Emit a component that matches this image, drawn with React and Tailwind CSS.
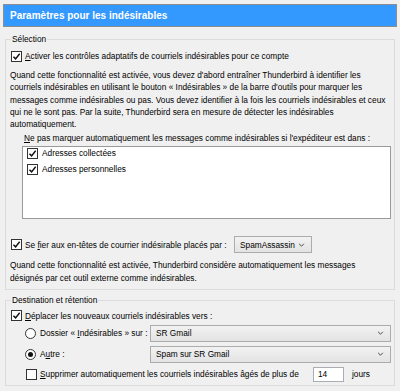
import React from "react";

const Check = ({ checked }) => (
  <span className="flex h-[11px] w-[11px] shrink-0 items-center justify-center border border-[#333333] bg-white">
    {checked && (
      <svg viewBox="0 0 10 10" className="h-[9px] w-[9px]">
        <path d="M1.6 5.2 L4 7.6 L8.5 2" fill="none" stroke="#111" strokeWidth="1.6" />
      </svg>
    )}
  </span>
);

const Radio = ({ checked }) => (
  <span className="flex h-[11px] w-[11px] shrink-0 items-center justify-center rounded-full border border-[#333333] bg-white">
    {checked && <span className="h-[5px] w-[5px] rounded-full bg-[#111]" />}
  </span>
);

const Chevron = () => (
  <svg viewBox="0 0 8 5" className="h-[4px] w-[7px] shrink-0">
    <path d="M1 1 L4 4 L7 1" fill="none" stroke="#333" strokeWidth="1.1" />
  </svg>
);

const Select = ({ value, className }) => (
  <div
    className={
      "flex h-[17px] items-center justify-between border border-[#acacac] bg-gradient-to-b from-[#f2f2f2] to-[#e3e3e3] pl-[5px] pr-[6px] " +
      className
    }
  >
    <span className="whitespace-nowrap">{value}</span>
    <Chevron />
  </div>
);

const U = ({ children }) => <span className="underline underline-offset-[1px]">{children}</span>;

export default function App() {
  return (
    <div className="h-[391px] w-[400px] overflow-hidden bg-[#f0f0f0] pt-[4px] font-['Liberation_Sans',Arial,sans-serif] text-[8.3px] leading-[12px] text-black">
      {/* Title bar */}
      <div className="mx-[3px] flex h-[23px] items-center border border-[#8d8d8d] bg-[#3399ff] pl-[6px] text-[10px] font-bold text-white">
        Paramètres pour les indésirables
      </div>

      {/* Sélection */}
      <div className="mx-[5px] mt-[12px] border border-[#dcdcdc] pb-[5px] pl-[4px] pr-[3px]">
        <div className="-mt-[7px] ml-[1px] w-fit bg-[#f0f0f0] px-[1px]">Sélection</div>

        <label className="ml-[1px] mt-[5px] flex h-[12px] items-center gap-[2px]">
          <Check checked />
          <span className="ml-[1px]">
            <U>A</U>ctiver les contrôles adaptatifs de courriels indésirables pour ce compte
          </span>
        </label>

        <p className="mt-[7px] whitespace-nowrap leading-[12.25px]">
          Quand cette fonctionnalité est activée, vous devez d'abord entraîner Thunderbird à identifier les
          <br />
          courriels indésirables en utilisant le bouton « Indésirables » de la barre d'outils pour marquer les
          <br />
          messages comme indésirables ou pas. Vous devez identifier à la fois les courriels indésirables et ceux
          <br />
          qui ne le sont pas. Par la suite, Thunderbird sera en mesure de détecter les indésirables
          <br />
          automatiquement.
        </p>

        <div className="ml-[14px] mt-[2px] whitespace-nowrap">
          <U>N</U>e pas marquer automatiquement les messages comme indésirables si l'expéditeur est dans :
        </div>

        <div className="ml-[12px] mt-[2px] h-[73px] border border-[#9a9a9a] bg-white pl-[4px]">
          <div className="flex h-[12px] items-center gap-[4px]">
            <Check checked />
            <span>Adresses collectées</span>
          </div>
          <div className="mt-[4px] flex h-[12px] items-center gap-[4px]">
            <Check checked />
            <span>Adresses personnelles</span>
          </div>
        </div>

        <div className="ml-[1px] mt-[17px] flex h-[17px] items-center">
          <Check checked />
          <span className="ml-[3px] w-[209px] whitespace-nowrap">
            Se <U>f</U>ier aux en-têtes de courrier indésirable placés par :
          </span>
          <Select value="SpamAssassin" className="w-[78px] from-[#e8e8e8] to-[#e0e0e0]" />
        </div>

        <p className="mt-[6px] whitespace-nowrap leading-[12.25px]">
          Quand cette fonctionnalité est activée, Thunderbird considère automatiquement les messages
          <br />
          désignés par cet outil externe comme indésirables.
        </p>
      </div>

      {/* Destination et rétention */}
      <div className="mx-[5px] mt-[10px] border border-[#dcdcdc] pb-[3px] pl-[4px] pr-[3px]">
        <div className="-mt-[7px] ml-[1px] w-fit bg-[#f0f0f0] px-[1px]">Destination et rétention</div>

        <label className="ml-[1px] mt-[4px] flex h-[12px] items-center gap-[3px]">
          <Check checked />
          <span>
            <U>D</U>éplacer les nouveaux courriels indésirables vers :
          </span>
        </label>

        <div className="mt-[3px] flex h-[17px] items-center">
          <div className="ml-[15px] flex w-[125px] shrink-0 items-center gap-[4px] whitespace-nowrap">
            <Radio />
            <span>
              Dossier « <U>I</U>ndésirables » sur :
            </span>
          </div>
          <Select value="SR Gmail" className="flex-1" />
        </div>

        <div className="mt-[4px] flex h-[17px] items-center">
          <div className="ml-[15px] flex w-[125px] shrink-0 items-center gap-[4px] whitespace-nowrap">
            <Radio checked />
            <span>
              A<U>u</U>tre :
            </span>
          </div>
          <Select value="Spam sur SR Gmail" className="flex-1" />
        </div>

        <div className="mt-[4px] flex h-[15px] items-center">
          <div className="ml-[16px] flex w-[287px] shrink-0 items-center gap-[3px] whitespace-nowrap">
            <Check />
            <span>
              <U>S</U>upprimer automatiquement les courriels indésirables âgés de plus de
            </span>
          </div>
          <div className="flex h-[15px] w-[31px] items-center border border-[#abadb3] bg-white pl-[4px]">
            14
          </div>
          <span className="ml-[8px]">jours</span>
        </div>
      </div>
    </div>
  );
}
